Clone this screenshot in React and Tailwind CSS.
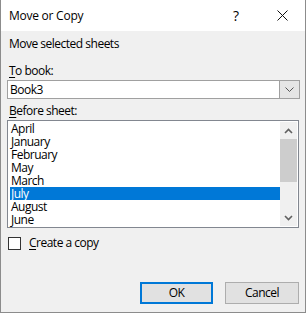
import React from 'react'

const SHEETS = ['April', 'January', 'February', 'May', 'March', 'July', 'August', 'June']
const SELECTED = 'July'

const font = { fontFamily: '"Segoe UI", "Open Sans", "Noto Sans", sans-serif' }

function Key({ k, rest }) {
  return (
    <span>
      <span className="underline underline-offset-[2px]">{k}</span>
      {rest}
    </span>
  )
}

function Chevron({ up }) {
  return (
    <svg width="9" height="6" viewBox="0 0 9 6">
      <path d={up ? 'M1 5 L4.5 1.5 L8 5' : 'M1 1 L4.5 4.5 L8 1'} fill="none" stroke="#606060" strokeWidth="1.6" />
    </svg>
  )
}

export default function App() {
  return (
    <div className="w-[306px] h-[313px] flex flex-col border-x border-b border-[#8c8c8c] text-[12px] text-black leading-[16px] overflow-hidden" style={font}>
      {/* Title bar */}
      <div className="h-[31px] bg-white flex items-center shrink-0">
        <div className="pl-[8px] flex-1 tracking-[-0.25px]">Move or Copy</div>
        <div className="w-[46px] text-center text-[14px]">?</div>
        <div className="w-[46px] flex items-center justify-center">
          <svg width="11" height="11" viewBox="0 0 11 11">
            <path d="M0.5 0.5 L10.5 10.5 M10.5 0.5 L0.5 10.5" stroke="#111" strokeWidth="1" />
          </svg>
        </div>
      </div>

      {/* Body */}
      <div className="flex-1 bg-[#f0f0f0] flex flex-col pl-[6px] tracking-[-0.5px]">
        <div className="mt-[5px] pl-[2px]">Move selected sheets</div>

        <div className="mt-[11px] pl-[2px]"><Key k="T" rest="o book:" /></div>
        <div className="mt-[1px] w-[293px] h-[19px] bg-white border border-[#a0a0a0] flex">
          <div className="flex-1 pl-[2px] leading-[17px]">Book3</div>
          <div className="w-[20px] bg-[#e5e5e5] border-l border-[#a0a0a0] flex items-center justify-center">
            <svg width="9" height="5" viewBox="0 0 9 5">
              <path d="M0.5 0.5 L4.5 4.5 L8.5 0.5" fill="none" stroke="#555" strokeWidth="1" />
            </svg>
          </div>
        </div>

        <div className="mt-[4px] pl-[2px]"><Key k="B" rest="efore sheet:" /></div>
        <div className="mt-[1px] w-[292px] h-[108px] bg-white border border-[#828790] flex p-[1px]">
          <div className="flex-1 flex flex-col pl-[1px]">
            {SHEETS.map(s => (
              <div key={s}
                className={`h-[13px] leading-[13px] pl-[1px] ${s === SELECTED ? 'bg-[#0078d7] text-white' : ''}`}>
                {s}
              </div>
            ))}
          </div>
          <div className="w-[17px] bg-[#f0f0f0] flex flex-col">
            <div className="h-[17px] flex items-center justify-center"><Chevron up /></div>
            <div className="h-[43px] bg-[#cdcdcd]" />
            <div className="flex-1" />
            <div className="h-[17px] flex items-center justify-center"><Chevron /></div>
          </div>
        </div>

        <div className="mt-[7px] flex items-center h-[16px]">
          <div className="ml-[1px] w-[13px] h-[13px] bg-white border border-[#333]" />
          <div className="ml-[8px]"><Key k="C" rest="reate a copy" /></div>
        </div>

        <div className="flex-1" />
        <div className="flex justify-end gap-[12px] pr-[6px] mb-[8px]">
          <div className="w-[73px] h-[22px] bg-[#e1e1e1] border-2 border-[#0078d7] flex items-center justify-center">OK</div>
          <div className="w-[74px] h-[22px] bg-[#e1e1e1] border border-[#adadad] flex items-center justify-center">Cancel</div>
        </div>
      </div>
    </div>
  )
}
